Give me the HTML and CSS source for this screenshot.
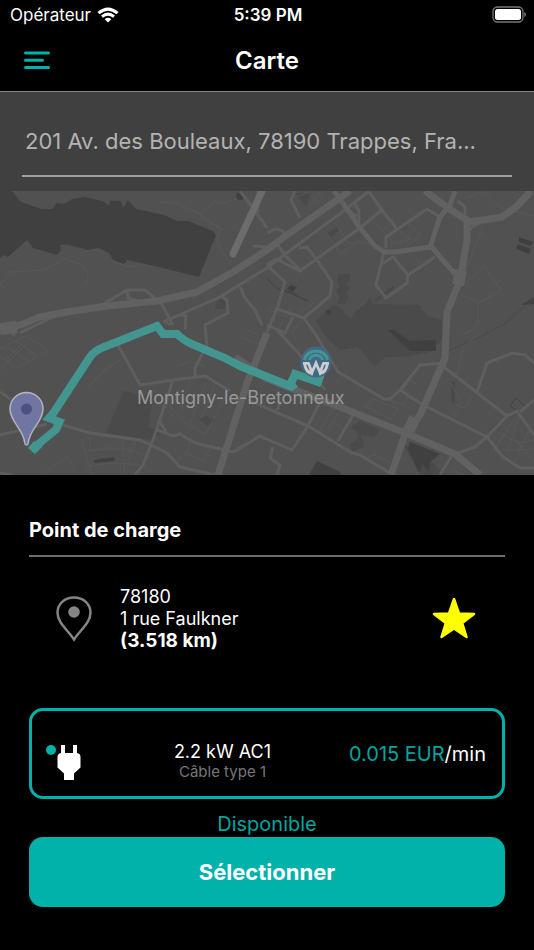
FILE: index.html
```html
<!DOCTYPE html>
<html lang="fr">
<head>
    <meta charset="UTF-8">
    <meta name="viewport" content="width=device-width, initial-scale=1">
    <title>Carte</title>
    <link rel="stylesheet" href="styles.css">
</head>
<body>
    <div class="status-bar">
        <div class="carrier">
            <span>Opérateur</span>
            <svg width="22" height="16" viewBox="0 0 22 16" fill="none" stroke="#fff" stroke-width="3">
                <path d="M1.5 6.2Q11 -2 20.500 6.200"/>
                <path d="M5 9.700Q11 4.500 17 9.700"/>
                <path d="M11 15.500L7.700 12.200Q11 9.500 14.300 12.200Z" fill="#fff" stroke="none"/>
            </svg>
        </div>
        <span class="clock">5:39 PM</span>
        <svg class="battery" width="34" height="18" viewBox="0 0 34 18">
            <rect x="1" y="1" width="30" height="15" rx="4.500" fill="none" stroke="#777" stroke-width="1.300"/>
            <rect x="3" y="3" width="26" height="11" rx="2.500" fill="#fff"/>
            <path d="M32.300 6Q34 6.700 34 8.500T32.300 11Z" fill="#777"/>
        </svg>
    </div>

    <header class="navbar">
        <button class="menu" type="button" aria-label="Menu">
            <svg width="26" height="20" viewBox="0 0 26 20" stroke="#00b2a9" stroke-width="3" stroke-linecap="round">
                <path d="M1.500 2H24.500M1.500 9.200H18.500M1.500 16.400H24.500"/>
            </svg>
        </button>
        <h1>Carte</h1>
    </header>

    <div class="search">
        <input type="text" class="address" aria-label="Adresse" value="201 Av. des Bouleaux, 78190 Trappes, Fra..." readonly>
    </div>

    <div class="map">
        <svg viewBox="0 191 534 284" preserveAspectRatio="xMidYMid slice">
            <!-- parcs et zones boisées -->
            <g fill="#4a4a4a">
                <path d="M351 320L355 312L367 303L370 297L373 304L419 305L427 316L442 320V340L430 352L410 356L385 357L375 367L369 360L358 347L340 350L325 336L316 321L333 305L336 304Z"/>
                <path d="M339 274L350 274L350 281L346 284L350 288L346 293L349 298L345 304H337L340 297L336 291L340 286L337 280Z"/>
                <path d="M124 391L153 397L148 427L163 432L150 440L106 433Z"/>
                <path d="M295 193L311 193L306 207Z"/>
                <path d="M374 300L394 285L394 289L376 302Z"/>
                <path d="M327 233L338 227L339 231L331 237Z"/>
                <path d="M216 303L222 298L227 303V308L215 309Z"/>
                <path d="M199 419L207 416L215 420L208 426Z"/>
                <path d="M451 381H455V403H451Z"/>
                <path d="M360 421L380 430L374 437L361 435L364 447L353 451L349 445L359 438L356 430L350 428Z"/>
                <path d="M403 444L420 475H445L430 460Z"/>
            </g>
            <g fill="#404040">
                <path d="M0 191H12L21 202L42 209H52L57 203L64 204L72 199L84 197L103 201L109 206L110 200.500L121 201L123 208L128 200L136 209L164 215L177 221H188L213 231L216 235L199 277L155 266L127 260L124 264L113 260L109 253L99 248L88 250L67 244.500L60 245L61 250L57 255L33 248L27 240L8 257L3 255L0 259Z"/>
                <circle cx="240" cy="196" r="4"/>
                <path d="M519 237L533 242L531 246L519 242ZM518 244L531 249L529 254L516 249Z"/>
                <path d="M290 285L297 287L293 292L287 289ZM325 312L329 309L332 312L328 316Z"/>
                <path d="M521 305L534 297V304Z"/>
                <path d="M388 330H394L410 341L436 340V351H410Z"/>
                <path d="M410 442L440 454L430 462L429 472L423 464L419 472L408 449Z"/>
                <path d="M317 461L340 472L341 475H309Z"/>
                <path d="M94 460L114 457L115 461L94 463Z"/>
            </g>
            <path fill="none" stroke="#424242" d="M267 279L278 289L290 293L308 301M286 290L298 295M510 406L516 398L525 406L519 412Z"/>
            <path fill="none" stroke="#494949" d="M448 351L484 335L507 322L534 298"/>
            <!-- sentiers -->
            <g class="paths">
                <path d="M0 285L10 272L43 270L65 259L82 265L88 275L87 283M162 202L176 203L199 214L210 206L215 201L221 204L237 199M195 211L221 229L217 240L225 257M80 253L98 249L111 261L130 267L145 264M245 240L254 246M200 217L221 229"/>
                <path d="M292 198L313 191M314 200L320 193L323 198L316 203ZM325 231L340 254L360 240M335 222L348 243L369 243M372 221L396 245L410 239L397 229M390 245L403 240M407 222L421 235L405 248M395 257L410 249L422 266M462 286L484 266L501 290L480 302L460 295M478 302V325L460 337M467 198L483 191L500 207L534 216M484 225L463 275M480 302L492 296"/>
                <path d="M0 349L25 336L49 350L16 369L0 356M8 348L30 362M15 340L38 357M5 360L27 340M0 370L25 345M122 359L105 370L88 387M40 475L67 457L75 469M82 440L92 475M90 435V450L120 450M122 438L125 475M90 451Q120 442 150 458M85 467Q115 460 145 466M135 442L128 460"/>
                <path d="M178 366L190 361L205 367M165 393L173 411L184 419M180 385L170 414L205 434M190 380L181 410M205 384L190 424M215 384L201 418M225 397L205 435M192 437L187 452L178 460M216 438L203 461L187 454M240 337L262 345M245 330L258 334"/>
                <path d="M267 309L290 318M276 313L273 327M284 317L278 332M315 302L294 316M302 319L292 333M363 408L373 399L398 409L391 419L366 407M401 393L410 380L416 384M409 394L404 405L390 400M450 382L461 403L453 419M475 392L465 408L456 405M457 375L463 347L478 335M327 430L342 407M319 432L333 408M330 421L345 429M365 458L375 455L391 463M455 454L478 475M446 469L465 475M464 452L452 467L460 475M493 430L520 443L534 440M501 423L520 445L534 462M515 417L494 451L534 449M519 415L506 458M532 424L513 466M485 430L503 444"/>
            </g>
            <!-- routes secondaires -->
            <g class="roads">
                <path d="M105 303L127 290H145L157 300M128 291L128 298L138 301M20 333L57 315L75 311M160 301L173 325M171 325L165 322L168 319M180 315L186 316L185 329M163 322L220 297L267 268L284 255L345 210L369 191"/>
                <path d="M240 191L250 204L258 215L267 228M258 191L258 212M253 246L267 247"/>
                <path d="M267 265L276 259L300 271L315 260L360 228L382 210M276 243L286 256L302 272M267 265L285 282L278 306L267 332M299 248L307 247L317 260L332 282L330 296L304 318L277 309M304 318L316 335L338 372L384 399L390 399L400 390L420 365L445 363"/>
                <path d="M300 218L291 200L295 191M268 233Q278 225 285 234M355 204L359 211V228M346 210L357 216"/>
                <path d="M369 192L382 210L397 229M386 248V237L427 209L440 217M384 252L376 285L386 298L407 283L408 275L393 257L382 264M408 275L435 257"/>
                <path d="M267 325L285 333L293 317M277 330L300 355L325 390M118 345L140 385L173 380L205 376L230 391M195 376L195 368L207 345L205 325L228 313L227 300L222 297M240 287L245 298L255 310L262 325"/>
                <path d="M0 392L15 402M0 435L47 424M0 473L12 475M63 425L90 433L140 440L153 446L167 453L180 467L215 475M135 475L143 465L153 440L173 380M157 430L173 436L180 434L195 443L233 452L252 441L259 436L267 439L292 450L308 426M160 422L166 432"/>
                <path d="M250 401L308 426L352 453L360 455L390 473M320 402L308 426M353 415L338 441M273 447L270 458L280 465L277 475M281 401L277 410"/>
                <path d="M444 367L507 416L487 437L475 447L455 454M477 392L487 363L512 353L525 355L534 363M507 416L517 411L534 435M520 412L534 400M400 390L423 405L487 437L503 457L520 468H534M452 455L440 475M0 328L15 335"/>
                <path d="M458 201L465 207V214M464 218L470 229L483 220M433 247L449 266"/>
            </g>
            <!-- axes principaux -->
            <g class="highways">
                <path d="M0 331L23 324L40 317L67 312L107 306L157 301L197 292L233 272L267 250L284 237L350 191"/>
                <path stroke-width="5" d="M334 191L347 209L360 228L375 246L384 252H395L430 247L440 217L450 205L455 191M432 247L440 257L456 275"/>
                <path d="M425 191L448 208L470 222L490 219L502 217L516 207L531 191M467 220L467 240L461 275L458 285L447 312L446 335L445 358L420 415L404 437L391 475"/>
                <path d="M235 357L267 379L335 405L410 435L455 454L480 475M267 333L247 383L218 475"/>
                <path stroke-width="12" d="M0 329L17 327M461 270L458 285M415 418L407 434"/>
                <path class="bridge" d="M262 191L233 254"/>
            </g>
            <path class="route" d="M31 450L56 429.500L59.500 422L49 418L54 412L90 357Q94 351 104 347L157 326L163 334H177Q184 341 194 345L225 358L240 366L290 386L295 374L318 382L322 371"/>
            <path fill="#42968f" d="M28 448L34 441L43 446L35 454ZM153 331L155 322L160 323L159 331ZM284 388L290 376L298 387L292 391Z"/>
            <text class="city" x="137" y="404">Montigny-le-Bretonneux</text>
            <!-- position de départ -->
            <path fill="#7175a4" stroke="#b3b2bd" stroke-width="1.500" d="M26.500 392.500A16.500 16.500 0 0 0 10 409C10 422 23.500 429 24.800 443Q25 445 26.500 445T28.200 443C29.500 429 43 422 43 409A16.500 16.500 0 0 0 26.500 392.500Z"/>
            <circle cx="26.500" cy="409" r="5.500" fill="#4c5083"/>
            <!-- borne -->
            <circle cx="316" cy="362" r="15.500" fill="#416987"/>
            <g fill="none">
                <path stroke="#42968f" stroke-width="3" d="M304.500 360A11.600 10.500 0 0 1 327.500 360M309.500 360A6.600 5.800 0 0 1 322.500 360"/>
                <path stroke="#ccc" stroke-width="2.800" d="M303 363.300H308.500L312 372.500L316 363L320 372.500L323.500 363.300H329M304.500 363Q305.500 372.500 313 374M327.500 363Q326.500 372.500 319 374"/>
            </g>
        </svg>
    </div>

    <main class="sheet">
        <h2>Point de charge</h2>

        <div class="place">
            <svg class="pin" width="36" height="46" viewBox="0 0 36 46">
                <path d="M18 1.500C8.500 1.500 1.500 8 1.500 16.500C1.500 27 12 34 18 43.500C24 34 34.500 27 34.500 16.500C34.500 8 27.500 1.500 18 1.500Z" fill="none" stroke="#858585" stroke-width="2.500"/>
                <circle cx="18" cy="16" r="5.800" fill="#858585"/>
            </svg>
            <address>
                78180<br>
                1 rue Faulkner<br>
                <strong>(3.518 km)</strong>
            </address>
            <button class="favorite" type="button" aria-label="Favori">
                <svg width="44" height="42" viewBox="0 0 44 42">
                    <path d="M22 1L27 15.500L42 16L30.200 25L34.500 39L22 30.500L9.500 39L13.800 25L2 16L17 15.500Z" fill="#ff0" stroke="#ff0" stroke-width="2.500" stroke-linejoin="round"/>
                </svg>
            </button>
        </div>

        <button class="connector" type="button">
            <svg class="plug" width="36" height="36" viewBox="0 0 36 36">
                <circle cx="5" cy="6" r="5" fill="#00b2a9"/>
                <path fill="#fff" d="M15 1H19V9H27V1H31V9Q34.500 9.500 34.500 13V23.500L28 29.500V36H18V29.500L11.500 23.500V13Q11.500 9.500 15 9Z"/>
            </svg>
            <span class="power">
                2.2 kW AC1
                <small>Câble type 1</small>
            </span>
            <span class="price"><span>0.015 EUR</span>/min</span>
        </button>

        <p class="state">Disponible</p>
        <button class="select" type="button">Sélectionner</button>
    </main>
</body>
</html>
```
FILE: styles.css
```css
* {
    box-sizing: border-box;
}
body {
    margin: 0;
    background: #000;
    color: #fff;
    font-family: Inter, "Liberation Sans", sans-serif;
}
button {
    padding: 0;
    border: 0;
    background: none;
    color: inherit;
    font-family: inherit;
    cursor: pointer;
}
svg {
    display: block;
}

/* barre d'état */
.status-bar {
    display: grid;
    grid-template-columns: 1fr auto 1fr;
    align-items: center;
    height: 30px;
    padding: 0 8px 0 10px;
    font-size: 17px;
}
.carrier {
    display: flex;
    align-items: center;
    gap: 6px;
}
.clock {
    font-weight: 600;
}
.battery {
    justify-self: end;
}

.navbar {
    display: grid;
    grid-template-columns: 1fr auto 1fr;
    align-items: center;
    height: 62px;
    padding: 0 24px;
    border-bottom: 1px solid #858585;
}
.menu {
    justify-self: start;
}
.navbar h1 {
    margin: 0;
    font-size: 24px;
    font-weight: 600;
}

.search {
    padding: 24px 22px 14px;
    background: #404040;
}
.address {
    display: block;
    width: 100%;
    height: 61px;
    padding: 0 3px 10px;
    border: 0;
    border-bottom: 2px solid #a0a0a0;
    background: none;
    color: #b3b3b3;
    font-family: inherit;
    font-size: 22px;
    outline: 0;
    text-overflow: ellipsis;
}

/* carte */
.map {
    background: #515151;
}
.map svg {
    width: 100%;
}
.paths {
    fill: none;
    stroke: #585858;
    stroke-width: 1;
}
.roads {
    fill: none;
    stroke: #5e5e5e;
    stroke-width: 3;
    stroke-linejoin: round;
}
.highways {
    fill: none;
    stroke: #616161;
    stroke-width: 7;
    stroke-linejoin: round;
}
.bridge {
    stroke: #6c6c6c;
    stroke-linecap: round;
}
.route {
    fill: none;
    stroke: #42968f;
    stroke-width: 8;
}
.city {
    fill: #999;
    font-size: 18px;
}

.sheet {
    padding: 40px 29px;
}
.sheet h2 {
    margin: 0;
    padding-bottom: 10px;
    border-bottom: 2px solid #6c6c6c;
    font-size: 20px;
    font-weight: 700;
    line-height: 30px;
}
.place {
    display: flex;
    align-items: center;
    padding: 29px 29px 56px 27px;
}
.place address {
    flex: 1;
    margin-left: 28px;
    font-size: 18px;
    font-style: normal;
    line-height: 22px;
}
.place strong {
    font-size: 19px;
}

.connector {
    display: grid;
    grid-template-columns: 50px 1fr auto;
    align-items: center;
    width: 100%;
    height: 91px;
    padding: 0 16px 0 14px;
    border: 3px solid #00b2a9;
    border-radius: 14px;
}
.plug {
    margin-top: 16px;
}
.power {
    padding-top: 14px;
    font-size: 18px;
    line-height: 22px;
}
.power small {
    display: block;
    color: #777;
    font-size: 15px;
    line-height: 18px;
}
.price {
    font-size: 20px;
}
.price span {
    color: #00a69e;
}
.state {
    margin: 0;
    padding-top: 12px;
    color: #00a69e;
    font-size: 20px;
    line-height: 26px;
    text-align: center;
}
.select {
    display: block;
    width: 100%;
    height: 70px;
    border-radius: 14px;
    background: #00b2a9;
    font-size: 22px;
    font-weight: 700;
}
```
